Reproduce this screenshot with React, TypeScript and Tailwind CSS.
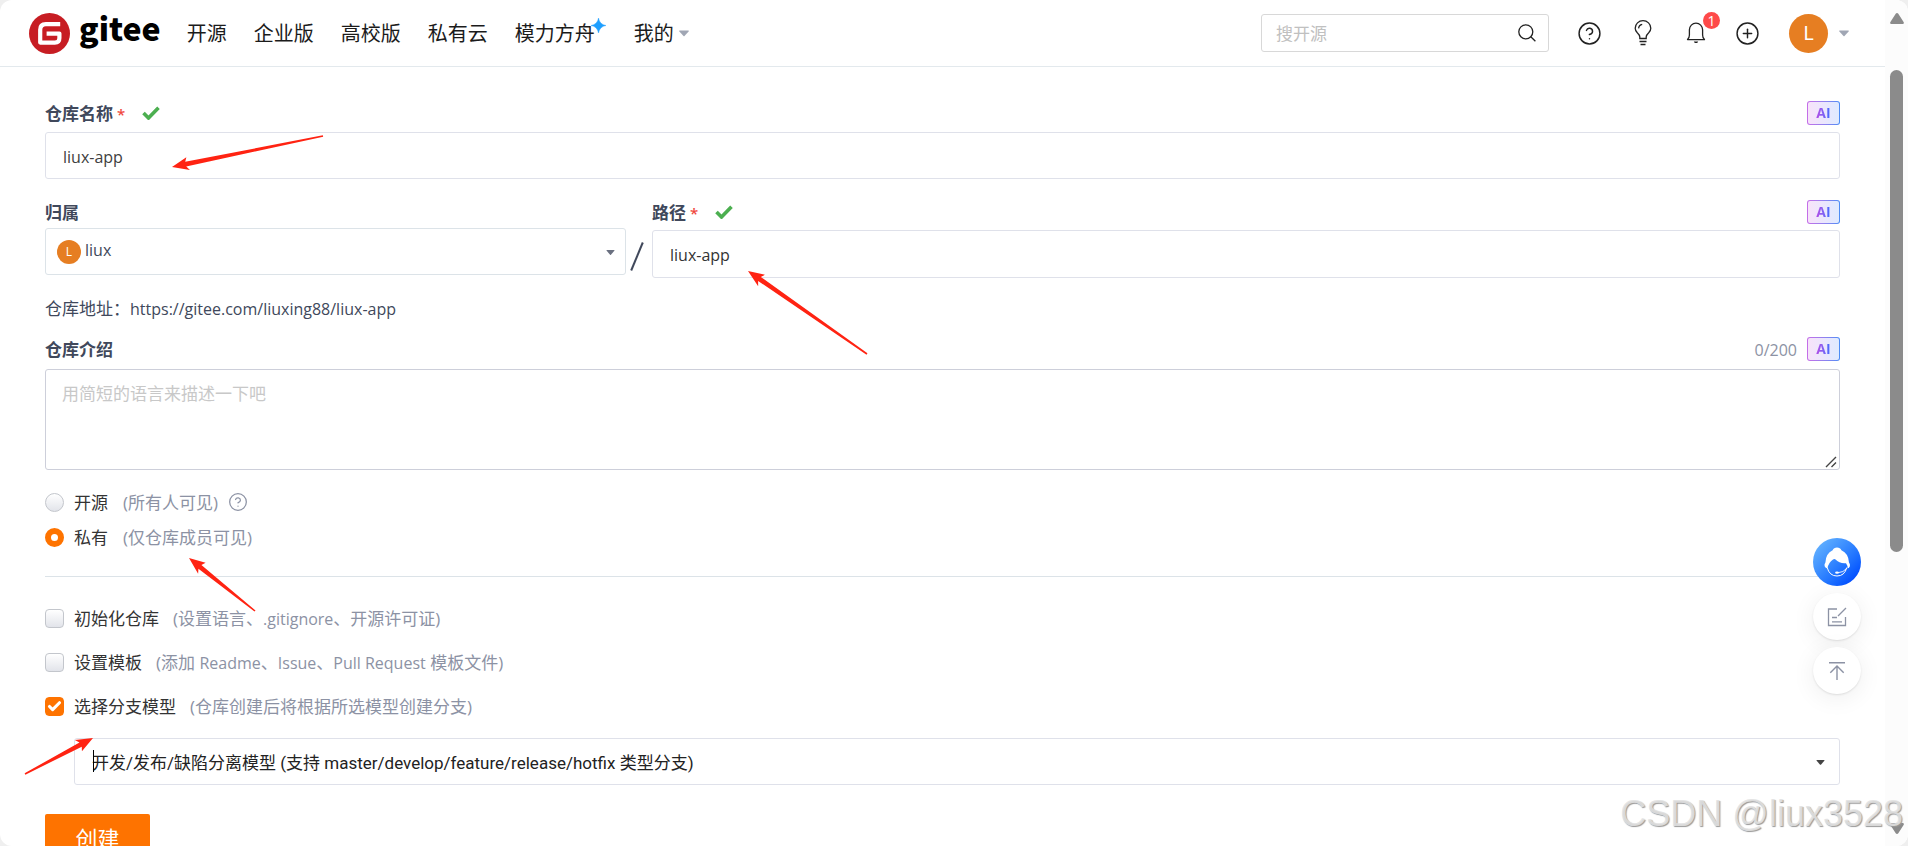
import type { ReactNode } from "react";
import { Check, CircleHelp, CirclePlus } from "lucide-react";

type Point = [number, number];

/** Tapered hand-drawn style arrow running from tail to tip. */
function Arrow({ tip, tail }: { tip: Point; tail: Point }) {
  const dx = tail[0] - tip[0];
  const dy = tail[1] - tip[1];
  const len = Math.hypot(dx, dy);
  const ux = dx / len;
  const uy = dy / len;
  const at = (along: number, side: number) =>
    `${tip[0] + ux * along - uy * side},${tip[1] + uy * along + ux * side}`;
  const points = [
    at(0, 0),
    at(16, -6.6),
    at(14, -2.4),
    at(len, -0.8),
    at(len, 0.8),
    at(14, 2.4),
    at(17, 6.6),
  ].join(" ");
  return <polygon points={points} fill="#ff2312" />;
}

function Caret({ className }: { className: string }) {
  return (
    <svg viewBox="0 0 10 6" className={className} fill="currentColor" aria-hidden="true">
      <path d="M.6 0h8.800q.8.200.2 1L5.500 5.600q-.5.500-1 0L.4 1Q-.2.200.6 0z" />
    </svg>
  );
}

function AiButton() {
  return (
    <button
      type="button"
      className="flex h-6 w-[33px] shrink-0 rounded-[3px] bg-linear-to-r from-[#c56ee8] to-[#4a8cf5] p-px"
    >
      <span className="flex h-full w-full items-center justify-center rounded-[2px] bg-linear-to-r from-[#f7e3fa] to-[#dfeaff]">
        <span className="bg-linear-to-r from-[#b44be6] to-[#2f6bff] bg-clip-text text-[14px] leading-none font-bold text-transparent">
          AI
        </span>
      </span>
    </button>
  );
}

function FieldLabel({
  htmlFor,
  children,
  required,
}: {
  htmlFor: string;
  children: ReactNode;
  required?: boolean;
}) {
  return (
    <div className="flex h-6 items-center">
      <label htmlFor={htmlFor} className="pt-[2px] font-bold text-[#40485b]">
        {children}
        {required && <span className="ml-1 text-[15px] font-semibold text-[#f0483e]">*</span>}
      </label>
      {required && (
        <svg viewBox="0 0 18 14" className="ml-[17px] h-[14px] w-[18px]" fill="none" aria-hidden="true">
          <path d="M1.500 7l5 5L16.500 1.800" stroke="#4caf50" strokeWidth="3.600" />
        </svg>
      )}
    </div>
  );
}

function RadioRow({
  id,
  label,
  hint,
  checked,
  children,
}: {
  id: string;
  label: string;
  hint: string;
  checked?: boolean;
  children?: ReactNode;
}) {
  return (
    <div className="flex h-[35px] items-center">
      <input
        id={id}
        type="radio"
        name="visibility"
        defaultChecked={checked}
        className="size-[19px] appearance-none rounded-full border border-[#c3c6cc] bg-linear-to-b from-white to-[#e2e4ea] checked:border-[6px] checked:border-[#fe7300] checked:bg-white checked:from-white checked:to-white"
      />
      <label htmlFor={id} className="ml-[10px] pt-px text-[#333]">
        {label}
        <span className="ml-[15px] text-[#8c92a4]">{hint}</span>
      </label>
      {children}
    </div>
  );
}

function CheckRow({
  id,
  label,
  hint,
  checked,
}: {
  id: string;
  label: string;
  hint: ReactNode;
  checked?: boolean;
}) {
  return (
    <div className="flex h-11 items-center">
      <span className="grid size-[19px]">
        <input
          id={id}
          type="checkbox"
          defaultChecked={checked}
          className="peer col-start-1 row-start-1 size-[19px] appearance-none rounded-[4px] border border-[#c3c6cc] bg-linear-to-b from-white to-[#e2e4ea] checked:border-[#fe7300] checked:from-[#fe7300] checked:to-[#fe7300]"
        />
        <Check
          className="pointer-events-none col-start-1 row-start-1 hidden size-[15px] place-self-center text-white peer-checked:block"
          strokeWidth={5}
        />
      </span>
      <label htmlFor={id} className="ml-[10px] pt-[2px] text-[#333]">
        {label}
        <span className="ml-[14px] text-[#8c92a4]">{hint}</span>
      </label>
    </div>
  );
}

function Header() {
  return (
    <header className="flex h-[67px] items-center border-b border-[#e3e9ed] pr-9 pl-[29px]">
      <a href="#home" className="flex items-start gap-[9px]">
        <svg viewBox="0 0 41 41" className="size-[41px]" aria-hidden="true">
          <circle cx="20.500" cy="20.500" r="20.500" fill="#c71d23" />
          <path
            d="M31.200 11.200H16.800q-5.600 0-5.600 5.600V29.600H25.800q4.600 0 4.600-4.600V20.600H17.600"
            fill="none"
            stroke="#fff"
            strokeWidth="4.200"
            strokeLinejoin="round"
          />
        </svg>
        <span className="font-['Noto_Sans_CJK_SC',sans-serif] text-[32px] leading-7 font-black text-black">
          gitee
        </span>
      </a>
      <nav className="ml-[26px] flex items-center gap-[27px] pt-px text-[20px] whitespace-nowrap text-[#1b1b1b]">
        <a href="#explore">开源</a>
        <a href="#enterprises">企业版</a>
        <a href="#education">高校版</a>
        <a href="#cloud">私有云</a>
        <a href="#ark" className="relative pr-[12px]">
          模力方舟
          <svg viewBox="0 0 14 14" className="absolute -top-[4px] right-px size-[15px]" fill="#1e9fff" aria-hidden="true">
            <path d="M7 0q1 6 7 7-6 1-7 7-1-6-7-7 6-1 7-7z" stroke="#1e9fff" strokeWidth=".4" />
          </svg>
        </a>
        <a href="#mine" className="flex items-center gap-[5px]">
          我的
          <Caret className="h-[7px] w-[10px] text-[#a0a6b4]" />
        </a>
      </nav>

      <div className="ml-auto flex items-center">
        <div className="flex h-[38px] w-[288px] items-center rounded-[3px] border border-[#d8d8d8] pr-[12px] pl-[14px]">
          <input
            type="search"
            aria-label="搜开源"
            placeholder="搜开源"
            className="min-w-0 flex-1 pt-[2px] outline-none placeholder:text-[#c0c0c0]"
          />
          <svg viewBox="0 0 18 18" className="size-[18px]" fill="none" stroke="#222" strokeWidth="1.300" aria-hidden="true">
            <circle cx="7.800" cy="7.800" r="7" />
            <path d="M12.800 12.800l4.600 4.400" />
          </svg>
        </div>
        <button type="button" aria-label="帮助" className="ml-[28px]">
          <CircleHelp className="size-[25px] text-[#222]" strokeWidth={1.4} />
        </button>
        <button type="button" aria-label="提示" className="ml-[32px]">
          <svg viewBox="0 0 18 26" className="h-[26px] w-[18px]" fill="none" stroke="#222" strokeWidth="1.300" aria-hidden="true">
            <path d="M5.800 18.500v-1.600Q5.600 15 3.300 12.800 1.200 10.500 1.200 8.200a7.800 7.500 0 0 1 15.600 0q0 2.300-2.100 4.600-2.300 2.200-2.500 4.100v1.600zM4.600 8.400q.2-3.300 3.600-4" />
            <path d="M5.500 21.500h7M6.500 24.500h5" strokeWidth="1.600" />
          </svg>
        </button>
        <button type="button" aria-label="通知" className="relative ml-[34px]">
          <svg viewBox="0 0 20 22" className="h-[22px] w-[20px]" fill="none" stroke="#222" strokeWidth="1.300" aria-hidden="true">
            <path d="M1.500 17.600q1.900-1.500 1.900-4.600V7.800a6.600 6.600 0 0 1 13.200 0V13q0 3.100 1.900 4.600z" strokeLinejoin="round" />
            <path d="M7.800 19.500h4.400l-1 1.500H8.800z" fill="#222" stroke="none" />
          </svg>
          <span className="absolute -top-[10px] left-[17px] flex size-[17px] items-center justify-center rounded-full bg-[#fe4a49] text-[14px] leading-none text-white">
            1
          </span>
        </button>
        <button type="button" aria-label="新建" className="ml-[29px]">
          <CirclePlus className="size-[25px] text-[#222]" strokeWidth={1.4} />
        </button>
        <button type="button" className="ml-[29px] flex items-center gap-[11px]">
          <span className="flex size-[39px] items-center justify-center rounded-full bg-[#e67e22] font-['Noto_Sans',sans-serif] text-[20px] text-white">
            L
          </span>
          <Caret className="h-[7px] w-[10px] text-[#a0a6b4]" />
        </button>
      </div>
    </header>
  );
}

function RepositoryForm() {
  return (
    <form className="px-[45px] pt-[34px]">
      <div className="flex items-center justify-between">
        <FieldLabel htmlFor="name" required>
          仓库名称
        </FieldLabel>
        <AiButton />
      </div>
      <input
        id="name"
        defaultValue="liux-app"
        className="mt-[7px] h-[47px] w-full rounded-[3px] border border-[#dfe1ea] px-[17px] pt-[2px] text-[16px] text-[#404040] outline-none"
      />

      <div className="mt-[21px] flex items-start">
        <div className="w-[581px] shrink-0">
          <FieldLabel htmlFor="owner">归属</FieldLabel>
          <div className="relative mt-1">
            <select
              id="owner"
              className="h-[47px] w-full appearance-none rounded-[3px] border border-[#dce3e8] bg-white pb-[3px] pl-[39px] text-[16px] text-[#40485b] outline-none"
            >
              <option>liux</option>
            </select>
            <span className="pointer-events-none absolute top-3 left-3 flex size-6 items-center justify-center rounded-full bg-[#e67e22] text-[12px] text-white">
              L
            </span>
            <Caret className="pointer-events-none absolute top-[22px] right-[11px] h-[5px] w-[9px] text-[#6a7080]" />
          </div>
        </div>
        <svg viewBox="0 0 14 29" className="mt-[42px] mr-2 ml-1 h-[29px] w-[14px]" aria-hidden="true">
          <path d="M1.200 28.500L12.800.5" stroke="#40485b" strokeWidth="2" />
        </svg>
        <div className="flex-1">
          <div className="flex items-center justify-between">
            <FieldLabel htmlFor="path" required>
              路径
            </FieldLabel>
            <AiButton />
          </div>
          <input
            id="path"
            defaultValue="liux-app"
            className="mt-[6px] h-12 w-full rounded-[3px] border border-[#dfe1ea] px-[17px] pt-[2px] text-[16px] text-[#333] outline-none"
          />
        </div>
      </div>

      <p className="mt-[19px] text-[#40485b]">
        仓库地址：<span className="text-[16px]">https://gitee.com/liuxing88/liux-app</span>
      </p>

      <div className="mt-4 flex h-6 items-center justify-between">
        <FieldLabel htmlFor="intro">仓库介绍</FieldLabel>
        <div className="flex items-center gap-[10px]">
          <span className="pt-[2px] text-[16px] text-[#8c92a4]">0/200</span>
          <AiButton />
        </div>
      </div>
      <div className="relative mt-2">
        <textarea
          id="intro"
          placeholder="用简短的语言来描述一下吧"
          className="block h-[101px] w-full resize-none rounded-[3px] border border-[#cdcfda] px-4 py-[12px] outline-none placeholder:text-[#c8c8c8]"
        />
        <svg viewBox="0 0 12 12" className="absolute right-[3px] bottom-[2px] size-3" stroke="#444" strokeWidth="1.400" aria-hidden="true">
          <path d="M1 11L11 1M6.500 11L11 6.500" />
        </svg>
      </div>

      <fieldset className="mt-[15px]">
        <RadioRow id="public" label="开源" hint="(所有人可见)">
          <CircleHelp className="mb-[2px] ml-[10px] size-5 text-[#8c92a4]" strokeWidth={1.5} />
        </RadioRow>
        <RadioRow id="private" label="私有" hint="(仅仓库成员可见)" checked />
      </fieldset>

      <hr className="mt-[21px] border-[#dce3e8]" />

      <div className="mt-[19px]">
        <CheckRow
          id="init"
          label="初始化仓库"
          hint={
            <>
              (设置语言、<span className="text-[16px]">.gitignore</span>、开源许可证)
            </>
          }
        />
        <CheckRow
          id="template"
          label="设置模板"
          hint={
            <>
              (添加 <span className="text-[16px]">Readme</span>、<span className="text-[16px]">Issue</span>、
              <span className="text-[16px]">Pull Request</span> 模板文件)
            </>
          }
        />
        <CheckRow id="branch" label="选择分支模型" hint="(仓库创建后将根据所选模型创建分支)" checked />
      </div>

      <div className="relative mt-[10px] ml-[29px]">
        <select
          aria-label="选择分支模型"
          className="h-[47px] w-full appearance-none rounded-[3px] border border-[#dfe1ea] bg-white pt-[2px] pl-[17px] font-[Roboto,'Noto_Sans_CJK_SC',sans-serif] text-[#222] outline-none"
        >
          <option>开发/发布/缺陷分离模型 (支持 master/develop/feature/release/hotfix 类型分支)</option>
        </select>
        <span className="pointer-events-none absolute top-3 left-[19px] h-[22px] w-px bg-black" />
        <Caret className="pointer-events-none absolute top-[22px] right-[15px] h-[5px] w-[9px] text-[#444]" />
      </div>

      <button type="submit" className="mt-[29px] h-12 w-[105px] rounded-[2px] bg-[#fe7300] text-[22px] text-white">
        创建
      </button>
    </form>
  );
}

function FloatingTools() {
  return (
    <div className="absolute top-[538px] right-[47px] flex flex-col gap-[7px]">
      <button type="button" aria-label="在线客服" className="size-12 rounded-full bg-linear-to-br from-[#5cabff] from-15% to-[#0550ff] to-85%">
        <svg viewBox="0 0 48 48" className="size-12" aria-hidden="true">
          <path
            d="M19.600 12.300Q20.800 9.500 24 9.500t4.400 2.800Q35.500 15.500 36 24.500q1.300 1.500.9 3.700-.8 2-2.300 2.300.2-3-1.600-5.300-6 .8-10.800-3.900-.8-.8-2.200.2-4.500 3-5.600 9-1.900-.3-2.800-2.300-.5-2.200.8-3.700.4-9 7.200-12.200z"
            fill="#fff"
          />
          <path d="M14.200 29.500q2.200 8.500 9.800 8.500t9.800-8.500" fill="none" stroke="#fff" strokeWidth="1" />
          <path d="M33.500 30.500q-3 4-8.500 4.200" fill="none" stroke="#fff" strokeWidth=".9" />
          <ellipse cx="24" cy="34.600" rx="1.900" ry="1.200" fill="#fff" />
        </svg>
      </button>
      <button
        type="button"
        aria-label="反馈"
        className="flex h-[47px] w-12 items-center justify-center rounded-full bg-white shadow-[0_1px_2px_rgba(0,0,0,0.1),0_4px_24px_rgba(0,0,0,0.07)]"
      >
        <svg viewBox="0 0 20 20" className="size-5" fill="none" stroke="#8c92a4" strokeWidth="1.300" aria-hidden="true">
          <path d="M10 2H1.500v16.500h17V10M19 1l-8 8M5 10.500h5M5 14.800h10" />
        </svg>
      </button>
      <button
        type="button"
        aria-label="返回顶部"
        className="flex h-[47px] w-12 items-center justify-center rounded-full bg-white shadow-[0_1px_2px_rgba(0,0,0,0.1),0_4px_24px_rgba(0,0,0,0.07)]"
      >
        <svg viewBox="0 0 20 20" className="size-5" fill="none" stroke="#8c92a4" strokeWidth="1.400" aria-hidden="true">
          <path d="M2 1.800h16M10 19V5M3.300 11.800L10 5l6.700 6.800" />
        </svg>
      </button>
    </div>
  );
}

export default function App() {
  return (
    <div className="h-screen overflow-hidden bg-[#efefef] font-['Open_Sans','Noto_Sans_CJK_SC',sans-serif] text-[17px] leading-6">
      <div className="relative flex h-full overflow-hidden rounded-xl bg-white">
        <main className="min-w-0 flex-1">
          <Header />
          <RepositoryForm />
        </main>

        <div className="flex w-[23px] shrink-0 flex-col items-center bg-[#fcfcfc] pt-[13px] pb-[12px]" aria-hidden="true">
          <svg viewBox="0 0 14 11" className="h-[11px] w-[14px]" fill="#8b8b8b">
            <path d="M7 0q.8 0 1.300.8l5.300 8.200q.9 2-1 2H1.400q-1.900 0-1-2L5.700.8Q6.200 0 7 0z" />
          </svg>
          <div className="mt-[46px] h-[482px] w-[13px] rounded-full bg-[#8b8b8b]" />
          <svg viewBox="0 0 14 11" className="mt-auto h-[11px] w-[14px]" fill="#8b8b8b">
            <path d="M7 11q.8 0 1.300-.8L13.600 2q.9-2-1-2H1.400q-1.900 0-1 2l5.300 8.200q.5.800 1.300.8z" />
          </svg>
        </div>

        <FloatingTools />

        <svg className="pointer-events-none absolute inset-0 h-full w-full" aria-hidden="true">
          <Arrow tip={[172, 167]} tail={[323, 136]} />
          <Arrow tip={[748, 271]} tail={[867, 354]} />
          <Arrow tip={[189, 558]} tail={[255, 611]} />
          <Arrow tip={[93, 738]} tail={[25, 774]} />
        </svg>

        <p className="pointer-events-none absolute right-[5px] bottom-[10px] font-['Liberation_Sans',sans-serif] text-[36px] leading-[44px] whitespace-nowrap text-[#e2e2e2]/90 [text-shadow:1px_1px_1px_#999]">
          CSDN @liux3528
        </p>
      </div>
    </div>
  );
}
